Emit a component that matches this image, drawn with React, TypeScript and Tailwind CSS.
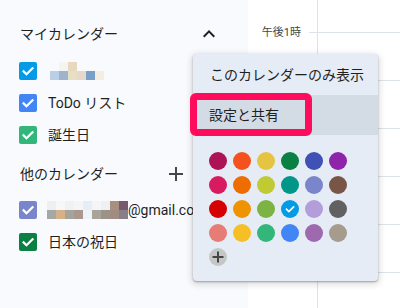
import type { ReactNode } from 'react'

const FONT = "font-['Roboto','Noto_Sans_CJK_JP',sans-serif]"

const SWATCHES = [
  '#ad1457', '#f4511e', '#e4c441', '#0b8043', '#3f51b5', '#8e24aa',
  '#d81b60', '#ef6c00', '#c0ca33', '#009688', '#7986cb', '#795548',
  '#d50000', '#f09300', '#7cb342', '#039be5', '#b39ddb', '#616161',
  '#e67c73', '#f6bf26', '#33b679', '#4285f4', '#9e69af', '#a79b8e',
]

const SELECTED = '#039be5'

// blurred (mosaic) names, two rows of 9px blocks
const MOSAIC_ME = [
  ['#f8fafd', '#f4f5ee', '#e7d8bf', '#f8fafd', '#f8fafd', '#f8fafd'],
  ['#b8cfe6', '#9fb3cc', '#e6dfc3', '#e8d8cc', '#79a0c8', '#f3eedf'],
]

const MOSAIC_MAIL = [
  ['#eef0f0', '#f6f7f8', '#f0f2f2', '#f4f5f6', '#e6edf5', '#f4f5f6', '#eef0f2', '#a89080', '#785870'],
  ['#a4a8a6', '#d6b088', '#a4a49c', '#a89890', '#eef3f8', '#a8a49a', '#9a9488', '#a08c80', '#888088'],
]

// only the first label is visible, the rest sit under the popup
const HOURS = ['午後1時', '', '', '', '', '']

function Check({ className = '' }: { className?: string }) {
  return (
    <svg viewBox="0 0 18 18" className={className} fill="none">
      <path d="M4.6 9.4l2.9 2.9 6-6" stroke="white" strokeWidth="2.2" strokeLinecap="square" />
    </svg>
  )
}

function ChevronUp() {
  return (
    <svg viewBox="0 0 24 24" className="h-6 w-6 text-[#1f1f1f]" fill="currentColor">
      <path d="M7.41 15.41L12 10.83l4.59 4.58L18 14l-6-6-6 6z" />
    </svg>
  )
}

function Plus() {
  return (
    <svg viewBox="0 0 24 24" className="h-6 w-6 text-[#444746]" fill="currentColor">
      <path d="M19 13h-6v6h-2v-6H5v-2h6V5h2v6h6v2z" />
    </svg>
  )
}

function Mosaic({ rows }: { rows: string[][] }) {
  return (
    <div className="flex flex-col">
      {rows.map((row, i) => (
        <div key={i} className="flex">
          {row.map((c, j) => (
            <div key={j} className="h-[9px] w-[9px]" style={{ backgroundColor: c }} />
          ))}
        </div>
      ))}
    </div>
  )
}

function CalendarRow({ color, children }: { color: string; children: ReactNode }) {
  return (
    <div className="flex h-8 items-center pl-[19px]">
      <div className="flex h-[18px] w-[18px] shrink-0 items-center justify-center rounded-[2px]" style={{ backgroundColor: color }}>
        <Check className="h-[18px] w-[18px]" />
      </div>
      <div className="ml-[11px] flex items-center whitespace-nowrap text-[14px] text-[#1f1f1f]">{children}</div>
    </div>
  )
}

function SectionHeader({ title, add }: { title: string; add?: boolean }) {
  return (
    <div className="flex h-10 items-center justify-between pl-5 pr-[27px]">
      <span className="text-[14px] text-[#1f1f1f]">{title}</span>
      <div className="flex items-center gap-[9px]">
        {add ? <Plus /> : null}
        <ChevronUp />
      </div>
    </div>
  )
}

function ColorMenu() {
  return (
    <div className="absolute left-[193px] top-[54px] h-[227px] w-[185px] rounded-[4px] bg-[#e5ecf6] pt-px shadow-[0_1px_2px_rgba(0,0,0,0.3),0_2px_6px_2px_rgba(0,0,0,0.12)]">
      <div className="flex h-10 items-center pl-[17px] text-[14px] text-[#1f1f1f]">このカレンダーのみ表示</div>
      <div className="flex h-10 items-center bg-[#d3dbe5] pl-4 text-[14px] text-[#1f1f1f]">設定と共有</div>

      <div className="grid w-max grid-cols-6 gap-[6px] pl-4 pt-[17px]">
        {SWATCHES.map((c) => (
          <div key={c} className="flex h-[18px] w-[18px] items-center justify-center rounded-full" style={{ backgroundColor: c }}>
            {c === SELECTED ? <Check className="h-[14px] w-[14px]" /> : null}
          </div>
        ))}
        <div className="flex h-[18px] w-[18px] items-center justify-center rounded-full bg-[#c4c7c5]">
          <svg viewBox="0 0 18 18" className="h-[18px] w-[18px]" fill="#444746">
            <path d="M8 3.5h2V8h4.5v2H10v4.5H8V10H3.5V8H8z" />
          </svg>
        </div>
      </div>

      {/* highlight annotation */}
      <div className="absolute -left-[3px] top-[39px] h-[43px] w-[122px] rounded-[6px] border-[7px] border-[#ff0c5c]" />
    </div>
  )
}

export default function App() {
  return (
    <div className={`relative flex h-[308px] w-[400px] overflow-hidden bg-white ${FONT}`}>
      <aside className="w-[248px] shrink-0 bg-[#f8fafd] pt-[14px]">
        <SectionHeader title="マイカレンダー" />
        <div className="pt-px">
          <CalendarRow color="#039be5">
            <span className="ml-[2px]">
              <Mosaic rows={MOSAIC_ME} />
            </span>
          </CalendarRow>
          <CalendarRow color="#4285f4">ToDo リスト</CalendarRow>
          <CalendarRow color="#33b679">誕生日</CalendarRow>
        </div>

        <div className="mt-[3px]">
          <SectionHeader title="他のカレンダー" add />
          <CalendarRow color="#7986cb">
            <span className="-ml-px">
              <Mosaic rows={MOSAIC_MAIL} />
            </span>
            <span>@gmail.com</span>
          </CalendarRow>
          <CalendarRow color="#0b8043">日本の祝日</CalendarRow>
        </div>
      </aside>

      <main className="flex flex-1 flex-col">
        <div className="flex h-8 shrink-0">
          <div className="w-[69px] shrink-0" />
          <div className="flex-1 border-l border-[#dde3ea]" />
        </div>
        {HOURS.map((h, i) => (
          <div key={i} className="flex h-12 shrink-0">
            <div className="relative w-[61px] shrink-0">
              {h ? (
                <span className="absolute -top-[7px] right-2 whitespace-nowrap text-[11px] text-[#444746]">{h}</span>
              ) : null}
            </div>
            <div className="w-2 shrink-0 border-t border-[#dde3ea]" />
            <div className="flex-1 border-l border-t border-[#dde3ea]" />
          </div>
        ))}
      </main>

      <ColorMenu />
    </div>
  )
}
